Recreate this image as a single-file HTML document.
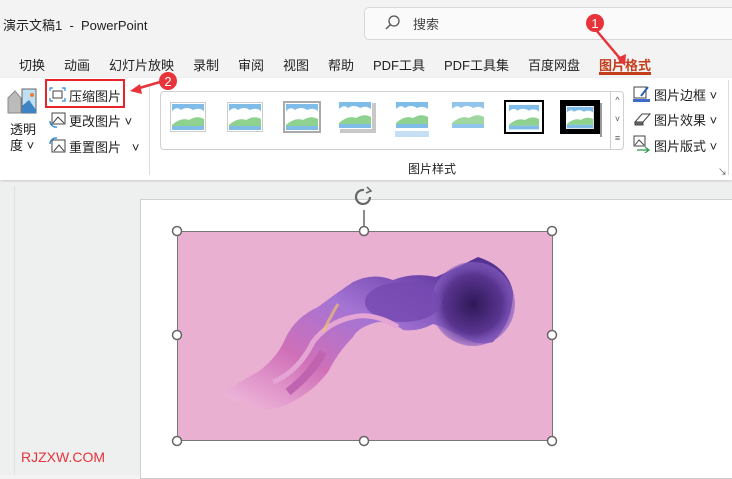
<!DOCTYPE html><html><head><meta charset="utf-8"><style>
*{margin:0;padding:0;box-sizing:border-box}
body{width:732px;height:475px;overflow:hidden;background:#f3f3f3;font-family:"Liberation Sans","Noto Sans CJK SC",sans-serif;position:relative;color:#222}
.a{position:absolute}
.t{font-size:13px;white-space:nowrap}
</style></head><body>
<div class="a t" style="left:3px;top:15px;font-size:13px">演示文稿1 &nbsp;- &nbsp;PowerPoint</div>
<div class="a" style="left:364px;top:7px;width:380px;height:33px;background:#fafafa;border:1px solid #d8d8d8;border-radius:5px"></div>
<svg class="a" style="left:384px;top:14px" width="18" height="18"><circle cx="10" cy="7" r="5" fill="none" stroke="#555" stroke-width="1.3"/><line x1="6.5" y1="10.5" x2="2" y2="15" stroke="#555" stroke-width="1.4"/></svg>
<div class="a t" style="left:413px;top:14px;color:#444">搜索</div>
<div class="a t" style="top:55px;left:19px">切换</div>
<div class="a t" style="top:55px;left:64px">动画</div>
<div class="a t" style="top:55px;left:109px">幻灯片放映</div>
<div class="a t" style="top:55px;left:193px">录制</div>
<div class="a t" style="top:55px;left:238px">审阅</div>
<div class="a t" style="top:55px;left:283px">视图</div>
<div class="a t" style="top:55px;left:328px">帮助</div>
<div class="a t" style="top:55px;left:373px">PDF工具</div>
<div class="a t" style="top:55px;left:444px">PDF工具集</div>
<div class="a t" style="top:55px;left:528px">百度网盘</div>
<div class="a t" style="top:55px;left:599px;color:#c43e1c;font-weight:bold">图片格式</div>
<div class="a" style="left:599px;top:72px;width:52px;height:3px;background:#c43e1c"></div>
<div class="a" style="left:0;top:78px;width:732px;height:102px;background:#fff;box-shadow:0 2px 4px rgba(0,0,0,.15)"></div>
<svg class="a" style="left:7px;top:88px" width="30" height="26"><path d="M1 25V10L8 3L14 10V25Z" fill="#bbb" stroke="#888"/><rect x="15" y="1" width="14" height="24" fill="#bfe0f3" stroke="#666"/><path d="M15 18L22 12L29 22V25H15Z" fill="#3d84c4"/><circle cx="25" cy="7" r="2" fill="#e87d2c"/></svg>
<div class="a t" style="left:10px;top:119px">透明</div>
<div class="a t" style="left:10px;top:135px">度 ˅</div>
<svg class="a" style="left:49px;top:87px" width="17" height="15"><path d="M1 4V1H4M13 1H16V4M16 11V14H13M4 14H1V11" fill="none" stroke="#2b88d8" stroke-width="1.2"/><rect x="4" y="4" width="9" height="7" fill="none" stroke="#444"/></svg>
<div class="a t" style="left:69px;top:86px">压缩图片</div>
<div class="a" style="left:45px;top:79px;width:80px;height:29px;border:2.5px solid #e8232a"></div>
<svg class="a" style="left:49px;top:112px" width="17" height="16"><rect x="3" y="1" width="13" height="11" fill="none" stroke="#444"/><path d="M4 11L9 5L15 11" fill="none" stroke="#444"/><path d="M1 9A6 6 0 0 0 8 15" fill="none" stroke="#2b88d8" stroke-width="1.4"/></svg>
<div class="a t" style="left:69px;top:111px">更改图片 ˅</div>
<svg class="a" style="left:49px;top:137px" width="17" height="16"><rect x="3" y="3" width="13" height="12" fill="none" stroke="#444"/><path d="M5 14L10 8L15 14" fill="none" stroke="#444"/><path d="M1 7A6 6 0 0 1 8 1" fill="none" stroke="#2b88d8" stroke-width="1.4"/></svg>
<div class="a t" style="left:69px;top:137px">重置图片 &nbsp;&nbsp;˅</div>
<div class="a" style="left:149px;top:85px;width:1px;height:90px;background:#ddd"></div>
<div class="a" style="left:160px;top:91px;width:464px;height:59px;border:1px solid #d0d0d0;border-radius:4px"></div>
<svg class="a" style="left:166px;top:98px" width="450" height="45">
<defs><g id="p"><rect width="34" height="28" fill="#fff"/><rect x="1" y="1" width="32" height="26" fill="#7fbce8"/><path d="M1 8Q6 3 10 7Q16 3 22 7Q28 4 33 8V27H1Z" fill="#fff"/><path d="M1 22Q10 14 18 17Q26 12 33 16V23H1Z" fill="#8fd18f"/><rect x="1" y="23" width="32" height="4" fill="#7fbce8"/></g></defs>
<g transform="translate(5,5)"><rect x="-1" y="-1" width="36" height="30" fill="#ccc"/><use href="#p"/></g>
<g transform="translate(62,5)"><rect x="-1" y="-1" width="36" height="30" fill="#ccc"/><use href="#p"/></g>
<g transform="translate(119,5)"><rect x="-2" y="-2" width="38" height="32" fill="#aaa"/><use href="#p"/></g>
<g transform="translate(172,3)"><rect x="2" y="2" width="36" height="30" fill="#c8c8c8"/><use href="#p"/></g>
<g transform="translate(229,3)"><use href="#p"/><rect x="0" y="30" width="34" height="6" fill="#c5e0f5"/></g>
<g transform="translate(285,3)" opacity=".85"><use href="#p"/></g>
<g transform="translate(341,5)"><rect x="-3" y="-3" width="40" height="34" fill="#000"/><rect x="-1" y="-1" width="36" height="30" fill="#fff"/><use href="#p" transform="translate(1,1) scale(.94)"/></g>
<g transform="translate(397,5)"><rect x="-3" y="-3" width="40" height="34" fill="#000"/><use href="#p" transform="translate(3,3) scale(.82)"/><rect x="37" y="0" width="2" height="34" fill="#999"/></g>
</svg>
<div class="a" style="left:610px;top:91px;width:14px;height:59px;border-left:1px solid #d0d0d0;font-size:9px;text-align:center;color:#555;line-height:19px">^<br>˅<br>≡</div>
<div class="a t" style="left:408px;top:160px;font-size:12px">图片样式</div>
<div class="a" style="left:718px;top:165px;font-size:9px;color:#555">↘</div>
<svg class="a" style="left:633px;top:85px" width="18" height="18"><rect x="1" y="2" width="12" height="11" fill="none" stroke="#444"/><path d="M8 11L15 2" stroke="#2b5fb0" stroke-width="2"/><rect x="0" y="14" width="17" height="3" fill="#3c6cc8"/></svg>
<div class="a t" style="left:654px;top:85px">图片边框 ˅</div>
<svg class="a" style="left:633px;top:111px" width="18" height="16"><path d="M2 11L9 3H17L10 11Z" fill="#fff" stroke="#444"/><path d="M2 11H10L10 14H2Z" fill="#666" stroke="#444"/></svg>
<div class="a t" style="left:654px;top:110px">图片效果 ˅</div>
<svg class="a" style="left:633px;top:135px" width="18" height="18"><rect x="1" y="1" width="11" height="10" fill="none" stroke="#444"/><path d="M2 10L6 5L11 10" fill="none" stroke="#444"/><path d="M4 15H16M12 12L16 15L12 18" fill="none" stroke="#2b9a4b" stroke-width="1.2"/></svg>
<div class="a t" style="left:654px;top:136px">图片版式 ˅</div>
<div class="a" style="left:728px;top:80px;width:1px;height:95px;background:#ddd"></div>
<div class="a" style="left:0;top:182px;width:732px;height:293px;background:#eeefef"></div>
<div class="a" style="left:14px;top:186px;width:1px;height:289px;background:#e0e0e0"></div>
<div class="a" style="left:140px;top:199px;width:600px;height:280px;background:#fff;border:1px solid #cfcfcf"></div>
<div class="a" style="left:177px;top:231px;width:376px;height:210px;background:#e9b0d2;border:1px solid #777;overflow:hidden">
<svg width="376" height="210"><defs>
<radialGradient id="g1"><stop offset="0" stop-color="#2e1858"/><stop offset=".7" stop-color="#5a3590"/><stop offset="1" stop-color="#8a62c4" stop-opacity=".6"/></radialGradient>
<linearGradient id="g2" x1="0" y1="1" x2="1" y2="0"><stop offset="0" stop-color="#f2c0de"/><stop offset=".3" stop-color="#d070b8"/><stop offset=".55" stop-color="#a474d4"/><stop offset=".8" stop-color="#6a40a8"/><stop offset="1" stop-color="#4a2a88"/></linearGradient></defs>
<path d="M45 162Q60 150 80 140Q100 125 108 105Q118 85 140 75Q160 60 175 50Q195 40 215 48Q235 40 258 45Q280 35 300 25Q330 35 335 60Q335 90 315 110Q300 115 285 105Q265 95 255 92Q240 100 225 98Q215 90 200 90Q180 95 175 105Q160 120 150 140Q135 160 110 172Q90 182 70 172Q55 170 45 162Z" fill="url(#g2)"/>
<ellipse cx="295" cy="72" rx="42" ry="42" fill="url(#g1)"/>
<ellipse cx="225" cy="70" rx="38" ry="20" fill="#7448b0" opacity=".8"/>
<path d="M95 150Q120 140 135 110Q150 90 175 85Q195 80 220 95" stroke="#e4a4d4" stroke-width="5" fill="none"/>
<path d="M110 160Q135 140 145 120" stroke="#c063b0" stroke-width="8" fill="none"/>
<path d="M145 100Q155 80 160 72" stroke="#f0c070" stroke-width="3" fill="none" opacity=".7"/>
</svg></div>
<svg class="a" style="left:170px;top:185px" width="392" height="264" fill="#fff" stroke="#666" stroke-width="1.5">
<path d="M194 25V46" fill="none"/>
<path d="M200 12A7 7 0 1 1 194 5" fill="none" stroke-width="2.2"/><path d="M197 2L201 6L196 8" fill="none"/>
<circle cx="7" cy="46" r="4.5"/><circle cx="194" cy="46" r="4.5"/><circle cx="382" cy="46" r="4.5"/>
<circle cx="7" cy="150" r="4.5"/><circle cx="382" cy="150" r="4.5"/>
<circle cx="7" cy="256" r="4.5"/><circle cx="194" cy="256" r="4.5"/><circle cx="382" cy="256" r="4.5"/>
</svg>
<div class="a" style="left:21px;top:449px;color:#e8333a;font-size:14px">RJZXW.COM</div>
<svg class="a" style="left:0;top:0" width="732" height="120">
<path d="M596 30L623 62" stroke="#e8333a" stroke-width="2.5"/><path d="M617 58L625 66L626 54Z" fill="#e8333a"/>
<circle cx="595" cy="23" r="9" fill="#e8333a"/><text x="595" y="28" font-size="13" fill="#fff" text-anchor="middle" font-family="Liberation Sans">1</text>
<path d="M160 82L136 89" stroke="#e8333a" stroke-width="2.5"/><path d="M130 91L140 84L142 94Z" fill="#e8333a"/>
<circle cx="168" cy="81" r="9" fill="#e8333a"/><text x="168" y="86" font-size="13" fill="#fff" text-anchor="middle" font-family="Liberation Sans">2</text>
</svg>
</body></html>
